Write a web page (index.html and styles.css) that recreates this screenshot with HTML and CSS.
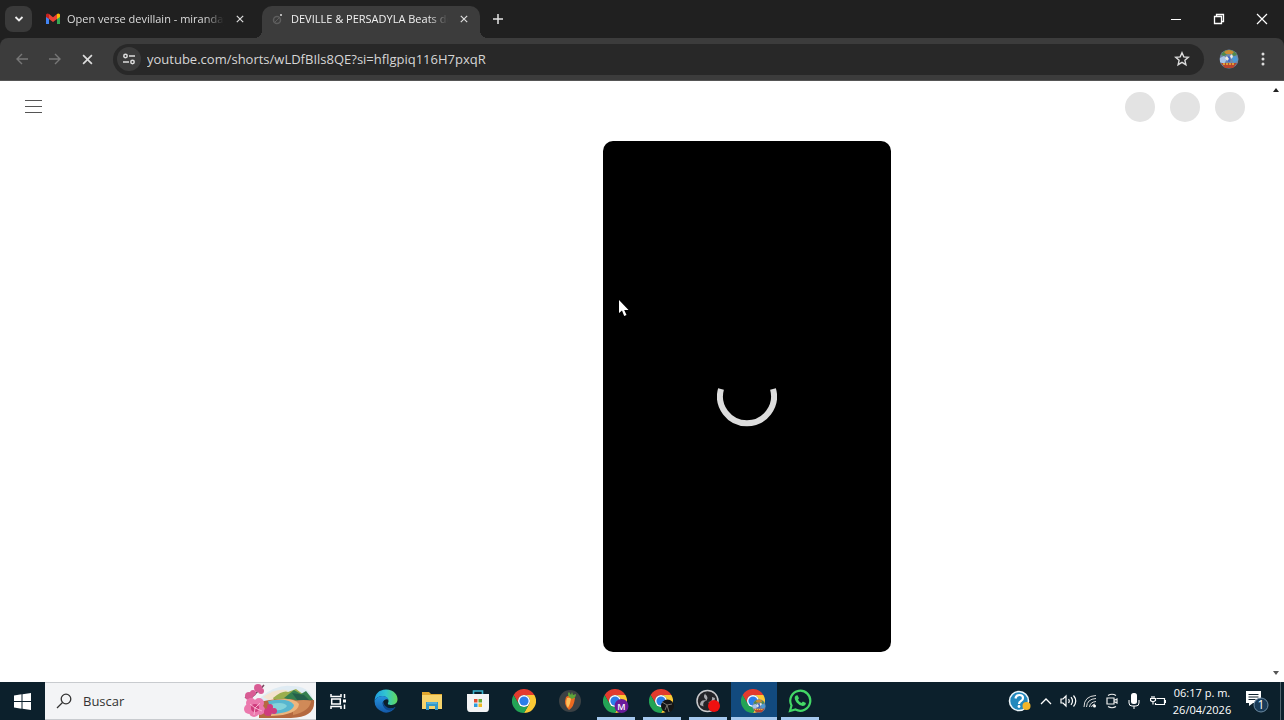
FILE: index.html
```
<!DOCTYPE html>
<html lang="es">
<head>
  <meta charset="UTF-8">
  <meta name="viewport" content="width=device-width, initial-scale=1">
  <title>DEVILLE &amp; PERSADYLA Beats</title>
  <link rel="stylesheet" href="styles.css">
</head>
<body>
  <!-- shared shapes -->
  <svg class="defs" aria-hidden="true">
    <symbol id="chrome" viewBox="-12 -12 24 24">
      <path fill="#e33b2e" d="M-10.4-6A12 12 0 0 1 10.4-6L0-6A6 6 0 0 0-5.2 3Z"/>
      <path fill="#fcc934" transform="rotate(120)" d="M-10.4-6A12 12 0 0 1 10.4-6L0-6A6 6 0 0 0-5.2 3Z"/>
      <path fill="#23a455" transform="rotate(240)" d="M-10.4-6A12 12 0 0 1 10.4-6L0-6A6 6 0 0 0-5.2 3Z"/>
      <circle r="6" fill="#fff"/>
      <circle r="4.6" fill="#2b7de9"/>
    </symbol>
    <symbol id="close" viewBox="0 0 10 10">
      <path d="M1 1l8 8M9 1L1 9" fill="none" stroke="currentColor" stroke-width="1.5"/>
    </symbol>
    <symbol id="avatar" viewBox="0 0 20 20">
      <circle cx="10" cy="10" r="9.5" fill="#7189a8"/>
      <path d="M2 6a9 9 0 0 1 16 0l-3 1-5-3-5 3z" fill="#4f8a4c"/>
      <path d="M5 3q5-4 10 0l-2 2H7z" fill="#c98a35"/>
      <path d="M1 9l4-2 3 3-3 5-4-2z" fill="#a8c4e8"/>
      <path d="M8 7l4 1-1 5-4-1z" fill="#3f66c4"/>
      <path d="M12 8l5-1 2 4-4 3z" fill="#4c9ad6"/>
      <path d="M6 9l2-2 2 3-2 2zM11 7l2-2 1 3-2 2z" fill="#ece9e0"/>
      <path d="M2 14h16l-4 5H6z" fill="#b8452e"/>
      <path d="M4 15h12" stroke="#e8bd3d" stroke-width="1.6" stroke-dasharray="2 1"/>
    </symbol>
  </svg>

  <header class="browser">
    <div class="tabstrip">
      <button class="tab-search" aria-label="Buscar pestañas">
        <svg width="10" height="10" viewBox="0 0 10 10"><path d="M1.5 3L5 6.5 8.5 3" fill="none" stroke="#eee" stroke-width="1.8"/></svg>
      </button>
      <div class="tab">
        <svg class="favicon" width="16" height="12" viewBox="0 0 16 12">
          <path d="M1 2v9h3V4z" fill="#4285f4"/>
          <path d="M12 4v7h3V2z" fill="#34a853"/>
          <path d="M12 1v5l3-2V1.5Q13.5 0 12 1z" fill="#fbbc04"/>
          <path d="M4 1v5l4 3 4-3V1L8 4.2z" fill="#ea4335"/>
          <path d="M1 1.5V4l3 2V1Q2.5 0 1 1.5z" fill="#c5221f"/>
        </svg>
        <span class="tab-title">Open verse devillain - miranday</span>
        <button class="tab-close" aria-label="Cerrar"><svg width="10" height="10"><use href="#close"/></svg></button>
      </div>
      <div class="tab active">
        <svg class="favicon" width="14" height="16" viewBox="0 0 14 16">
          <circle cx="6" cy="9" r="3.5" fill="none" stroke="#5e5e5e" stroke-width="1.5"/>
          <path d="M4 11l4-4" stroke="#5e5e5e"/>
          <circle cx="10" cy="4" r="1" fill="#ddd"/>
        </svg>
        <span class="tab-title">DEVILLE &amp; PERSADYLA Beats de</span>
        <button class="tab-close" aria-label="Cerrar"><svg width="10" height="10"><use href="#close"/></svg></button>
      </div>
      <button class="new-tab" aria-label="Nueva pestaña">
        <svg width="10" height="10" viewBox="0 0 10 10"><path d="M5 0v10M0 5h10" stroke="#e3e3e3" stroke-width="1.5"/></svg>
      </button>
      <div class="window-controls">
        <button aria-label="Minimizar"><svg width="12" height="12" viewBox="0 0 12 12"><path d="M1 6.5h10" stroke="#fff"/></svg></button>
        <button aria-label="Restaurar"><svg width="12" height="12" viewBox="0 0 12 12"><path d="M1.5 3.5h7v7h-7zM3.5 3V1.5h7v7H9" fill="none" stroke="#fff" stroke-width="1.3"/></svg></button>
        <button aria-label="Cerrar ventana"><svg width="12" height="12" viewBox="0 0 12 12"><path d="M1 1l10 10M11 1L1 11" stroke="#fff" stroke-width="1.2"/></svg></button>
      </div>
    </div>

    <div class="toolbar">
      <button class="nav off" aria-label="Atrás"><svg width="14" height="12" viewBox="0 0 14 12"><path d="M13 6H2M7 1L2 6l5 5" fill="none" stroke="currentColor" stroke-width="1.4"/></svg></button>
      <button class="nav off" aria-label="Adelante"><svg width="14" height="12" viewBox="0 0 14 12"><path d="M1 6h11M7 1l5 5-5 5" fill="none" stroke="currentColor" stroke-width="1.4"/></svg></button>
      <button class="nav" aria-label="Detener"><svg width="11" height="11"><use href="#close"/></svg></button>
      <div class="omnibox">
        <button class="site-info" aria-label="Información del sitio">
          <svg width="14" height="14" viewBox="0 0 14 14" fill="none" stroke="#ddd" stroke-width="1.5"><circle cx="3.5" cy="4" r="1.7"/><path d="M7 4h6M1 10h6"/><circle cx="10.5" cy="10" r="1.7"/></svg>
        </button>
        <input class="url" type="text" aria-label="Dirección" value="youtube.com/shorts/wLDfBIls8QE?si=hflgpiq116H7pxqR">
        <button class="star" aria-label="Favorito">
          <svg width="16" height="16" viewBox="0 0 16 16"><path d="M8 1.8l1.8 4.1 4.5.4-3.4 3 1 4.4L8 11.4l-3.9 2.3 1-4.4-3.400-3 4.500-.4z" fill="none" stroke="#ddd" stroke-width="1.4"/></svg>
        </button>
      </div>
      <button class="profile" aria-label="Perfil"><svg width="20" height="20"><use href="#avatar"/></svg></button>
      <button class="menu" aria-label="Menú"><svg width="4" height="14" viewBox="0 0 4 14" fill="#ddd"><circle cx="2" cy="2" r="1.5"/><circle cx="2" cy="7" r="1.5"/><circle cx="2" cy="12" r="1.5"/></svg></button>
    </div>
  </header>

  <div class="page">
    <div class="page-body">
      <div class="masthead">
        <button class="guide" aria-label="Guía"><svg width="18" height="14" viewBox="0 0 18 14"><path d="M1 .5h17M1 6.5h17M1 12.5h17" stroke="#555" stroke-width="1.2"/></svg></button>
        <div class="skeletons"><span></span><span></span><span></span></div>
      </div>
      <main class="shorts">
        <div class="player">
          <svg class="spinner" width="60" height="62" viewBox="0 0 60 62"><path d="M4 23A27 27 0 1 0 56 23" fill="none" stroke="#ddd" stroke-width="6"/></svg>
          <svg class="cursor" width="12" height="18" viewBox="0 0 12 18"><path d="M1 1v13l3-2.600L6.200 17l2.300-1-2.300-5h4.300z" fill="#fff"/></svg>
        </div>
      </main>
    </div>
    <div class="scrollbar">
      <svg width="8" height="6" viewBox="0 0 8 6"><path d="M1 5l3-4 3 4z" fill="#222"/></svg>
      <svg width="8" height="6" viewBox="0 0 8 6"><path d="M1 1l3 4 3-4z" fill="#555"/></svg>
    </div>
  </div>

  <footer class="taskbar">
    <button class="start" aria-label="Inicio">
      <svg width="17" height="17" viewBox="0 0 17 17" fill="#fff"><path d="M0 2.400L7.500 1.300V8H0zM8.500 1.200L17 0v8H8.500zM0 9h7.500v6.700L0 14.600zM8.500 9H17v8l-8.500-1.200z"/></svg>
    </button>
    <label class="search">
      <svg width="16" height="16" viewBox="0 0 16 16" fill="none" stroke="#333" stroke-width="1.3"><circle cx="10" cy="6" r="4.800"/><path d="M6.500 9.500L1 15"/></svg>
      <input type="text" aria-label="Buscar" placeholder="Buscar">
      <svg class="search-art" width="72" height="36" viewBox="0 0 72 36">
        <path d="M18 14Q34 1 48 3 66 3 70 16v8H14z" fill="#dfebf3"/>
        <path d="M20 14Q32 5 44 7l4 6-20 5z" fill="#f4e3cf"/>
        <path d="M30 15Q40 7 45 9l8-3 16 12v5H34z" fill="#9cae4d"/>
        <path d="M41 15l10-8 7 4 5-3 8 10-14 2z" fill="#357f50"/>
        <path d="M49 10l6 8 14 2-8-8z" fill="#245f4b"/>
        <path d="M16 19Q46 13 54 18l17-1Q73 34 48 35H16z" fill="#b5693f"/>
        <path d="M50 18q12-2 18 0-1 10-18 14z" fill="#d08a58"/>
        <path d="M26 18Q50 13 56 21 55 32 28 33z" fill="#edb67e"/>
        <path d="M25 18Q46 14 51 22 50 30 29 31z" fill="#58b6cf"/>
        <path d="M28 21q13-3 16 2-3 5-13 4z" fill="#83d2da"/>
        <path d="M2 14q5 3 11-4 5-4 8-8" fill="none" stroke="#77465e" stroke-width="1.5"/>
        <g fill="#d85c94"><circle cx="6" cy="13" r="4"/><circle cx="10" cy="10" r="3"/><circle cx="15" cy="5" r="4"/><circle cx="18" cy="8" r="3"/></g>
        <g fill="#eb79ad"><circle cx="8" cy="20" r="5"/><circle cx="16" cy="20" r="5"/><circle cx="17" cy="27" r="5"/><circle cx="11" cy="29" r="5"/><circle cx="6" cy="26" r="5"/></g>
        <g fill="#cf3c7d"><circle cx="12" cy="25" r="4"/><circle cx="27" cy="24" r="3"/><circle cx="25" cy="29" r="4"/><circle cx="31" cy="28" r="3"/></g>
        <path d="M12 25l-5-4M12 25l5-5M12 25l-1 7M12 25l7 3" stroke="#f8b2d0"/>
      </svg>
    </label>
    <button class="task-view" aria-label="Vista de tareas">
      <svg width="17" height="15" viewBox="0 0 17 15" fill="none" stroke="#fff" stroke-width="1.5"><path d="M1 0v2.500h10V0M1 15v-2.500h10V15M1.700 5h8.600v5H1.700zM14.500 0v4M14.500 10.500V15"/><path d="M13 5.500h3v3h-3z" fill="#fff" stroke="none"/></svg>
    </button>
    <nav class="apps">
      <button aria-label="Edge">
        <svg width="24" height="24" viewBox="0 0 24 24">
          <defs>
            <linearGradient id="edge-top" x1="0" x2="1"><stop offset="0" stop-color="#1e9be0"/><stop offset=".5" stop-color="#32c6d0"/><stop offset="1" stop-color="#62d957"/></linearGradient>
            <linearGradient id="edge-low" x1="0" y1="0" x2="0" y2="1"><stop offset="0" stop-color="#2493df"/><stop offset="1" stop-color="#1459a8"/></linearGradient>
          </defs>
          <path d="M.5 12Q1 1 12 .5C20 .5 24 6 23.500 11c-.5 4-4 5-7 5-3-.2-3-1.500-2-3Q15 8 9 7 3 7 .5 12z" fill="url(#edge-top)"/>
          <path d="M.5 12Q3 7 9 7q5 .5 5.500 4-1-1-3-.5C6 13 9 20 16 19.500q3 0 5.500-1.500c-3 5-8 6.500-12 5.300Q.5 20 .5 12z" fill="url(#edge-low)"/>
          <path d="M9.500 12c-2 5 2 10 7 9.500q3-.5 5-3.500-4 2.500-8 .5-4-2-4-6.500z" fill="#0d478d"/>
        </svg>
      </button>
      <button aria-label="Explorador">
        <svg width="22" height="20" viewBox="0 0 22 20"><path d="M1 1h7l2 2h11v4H1z" fill="#e0a72e"/><path d="M1 4h20v14H1z" fill="#f6d36c"/><path d="M5 19v-8h12v8h-3v-4H8v4z" fill="#3298c9"/><path d="M6 12h10" stroke="#77c5e5"/></svg>
      </button>
      <button aria-label="Tienda">
        <svg width="22" height="24" viewBox="0 0 22 24"><path d="M6.500 6V2h9v4" fill="none" stroke="#38b3cd" stroke-width="1.600"/><path d="M0 5h22v14q0 4-3 4H3q-3 0-3-4z" fill="#f3f4f5"/><path d="M7 10h3.500v3.500H7z" fill="#e34c30"/><path d="M11.500 10H15v3.500h-3.500z" fill="#63a936"/><path d="M7 14.500h3.500V18H7z" fill="#2b9cdc"/><path d="M11.500 14.500H15V18h-3.500z" fill="#efb920"/></svg>
      </button>
      <button aria-label="Chrome"><svg width="24" height="24"><use href="#chrome"/></svg></button>
      <button aria-label="FL Studio">
        <svg width="24" height="24" viewBox="0 0 24 24"><circle cx="12" cy="12" r="11" fill="#3c4144"/><path d="M8 8q5-4 9 1-1 9-6 12-6-5-3-13z" fill="#ee6a20"/><path d="M9 9q3-1 4 1-1 6-3 9-3-4-1-10z" fill="#ffc05a"/><path d="M11 8Q9 5 11 3l2 3 1-3 1 3 3-1q0 4-4 5z" fill="#5fa43a"/></svg>
      </button>
      <button class="open" aria-label="Chrome, perfil M">
        <svg width="26" height="24" viewBox="0 0 26 24"><use href="#chrome" width="24" height="24"/><circle cx="18.500" cy="17" r="7" fill="#6a1b9a"/><text class="badge-letter" x="18.500" y="20.500">M</text></svg>
      </button>
      <button class="open" aria-label="Chrome, perfil 2">
        <svg width="26" height="24" viewBox="0 0 26 24"><use href="#chrome" width="24" height="24"/><circle cx="18.500" cy="17" r="6.500" fill="#151515"/><path d="M13 13l5 3 5-1M18 16l-2 5M18 16l2 7" fill="none" stroke="#77736b"/></svg>
      </button>
      <button class="open" aria-label="OBS">
        <svg width="24" height="24" viewBox="0 0 24 24"><circle cx="11.500" cy="12" r="10.500" fill="#242428" stroke="#c9c9cc" stroke-width="1.5"/><g fill="#a9a9ae"><path d="M11 3q-6 4-.5 8.500Q13 8 9 5zM4 16q0-6 7-4.500-5 1-3.500 6zM19 9q-1 8-7 4 5 0 4-5z"/></g><circle cx="18" cy="17" r="6" fill="#ef1010"/></svg>
      </button>
      <button class="open current" aria-label="Chrome, perfil 3">
        <svg width="26" height="24" viewBox="0 0 26 24"><use href="#chrome" width="24" height="24"/><use href="#avatar" x="11" y="10" width="14" height="14"/></svg>
      </button>
      <button class="open" aria-label="WhatsApp">
        <svg width="24" height="24" viewBox="0 0 24 24"><path d="M2 22l1.500-5.500A10 10 0 1 1 7.500 20.500z" fill="none" stroke="#43d866" stroke-width="2.200"/><path d="M8 6.500l1.500-.2 1.500 3-1 1.500q1.300 2.300 3.500 3.200l1.400-1.500 3 1.500c0 2-1.400 3-3.200 3C10.500 16.500 6 11.500 6.800 8q.3-1 1.200-1.500z" fill="#43d866"/></svg>
      </button>
    </nav>

    <div class="tray">
      <button aria-label="Ayuda">
        <svg width="24" height="22" viewBox="0 0 24 22"><circle cx="11" cy="11" r="9.500" fill="#2288bd" stroke="#eef6fa" stroke-width="1.600"/><path d="M7.500 8.500Q8 5 11.500 5t3.500 3q0 2-2 3t-2 3" fill="none" stroke="#fff" stroke-width="2.200"/><circle cx="11" cy="16.500" r="1.400" fill="#fff"/><circle cx="18.500" cy="16" r="4" fill="#f2b529"/></svg>
      </button>
      <button aria-label="Iconos ocultos"><svg width="12" height="8" viewBox="0 0 12 8"><path d="M1 7l5-5 5 5" fill="none" stroke="#fff" stroke-width="1.300"/></svg></button>
      <button aria-label="Volumen"><svg width="17" height="14" viewBox="0 0 17 14" fill="none" stroke="#fff" stroke-width="1.2"><path d="M1 5h2l3-3v10L3 9H1zM8.500 5q1.500 2 0 4M11 3.200q3 3.800 0 7.600M13.500 1.500q4.500 5.500 0 11"/></svg></button>
      <button aria-label="Red"><svg width="14" height="14" viewBox="0 0 14 14" fill="none" stroke="#ddd"><path d="M1 13Q1 2 13 1.500M3.500 13Q4 5 13 4.500M6.500 13Q7 8 13 7.500"/><circle cx="11.500" cy="12" r="1.500" fill="#fff" stroke="none"/><path d="M8.500 13q.5-2.500 3.500-3"/></svg></button>
      <button aria-label="Reunirse ahora"><svg width="14" height="16" viewBox="0 0 14 16" fill="none" stroke="#eee" stroke-width="1.200"><path d="M3 2.500q4-2.500 8 0M3 13.500q4 2.500 8 0M2 5h7v6H2zM9 7.500L12 6v4L9 8.500"/></svg></button>
      <button aria-label="Micrófono"><svg width="12" height="16" viewBox="0 0 12 16"><rect x="3" y="0" width="6" height="11" rx="2.500" fill="#fff"/><path d="M1 7v3q0 3 3 3h4q3 0 3-3V7M6 13v3" fill="none" stroke="#fff"/></svg></button>
      <button class="battery" aria-label="Batería"><svg width="16" height="12" viewBox="0 0 16 12" fill="none" stroke="#fff" stroke-width="1.2"><path d="M6.500 3.500h8v6H5.500V8M15.500 5v3M.5 3.500h5v2L3 7 .5 5.500zM2 1v2M4 1v2M3 7v2.500"/></svg></button>
      <div class="clock"><time>06:17 p. m.</time><time>26/04/2026</time></div>
      <button class="notifications" aria-label="Notificaciones">
        <svg width="24" height="24" viewBox="0 0 24 24"><path d="M1 2h15v12H8l-4 3v-3H1z" fill="#fff"/><path d="M3.500 5.500h10M3.500 8h10M3.500 10.500h7" stroke="#0c202c"/><circle cx="16" cy="16" r="7" fill="#193b58" stroke="#6d8ba3"/><text class="count" x="16" y="20">1</text></svg>
      </button>
      <button class="show-desktop" aria-label="Mostrar escritorio"></button>
    </div>
  </footer>
</body>
</html>
```
FILE: styles.css
```
* {box-sizing:border-box;}
body {
  margin:0; height:100vh; display:flex; flex-direction:column; overflow:hidden;
  font-family:"Open Sans", "Noto Sans", sans-serif; font-size:12px; background:#fff;
}
button {
  display:flex; align-items:center; justify-content:center; flex:none;
  padding:0; border:0; background:none; color:#ddd; font:inherit;
}
input {border:0; padding:0; background:none; font:inherit; min-width:0; outline:0;}
svg {display:block; flex:none;}
.defs {position:absolute; width:0; height:0;}

/* tabs */
.browser {background:#202020;}
.tabstrip {display:flex; height:38px; padding:0 1px 0 5px; align-items:center;}
.tab-search {width:27px; height:26px; border-radius:8px; background:#3a3a3a;}
.tab {
  display:flex; align-items:center; position:relative; align-self:flex-end;
  width:218px; height:32px; padding:0 8px 6px 9px; color:#ddd;
}
.tab:not(.active) {margin-left:4px; width:226px; padding-right:14px;}
.tab.active {background:#3c3c3c; border-radius:10px 10px 0 0;}
.tab.active::before, .tab.active::after {
  content:""; position:absolute; bottom:0; width:8px; height:8px;
}
.tab.active::before {right:100%; background:radial-gradient(circle at 0 0, transparent 8px, #3c3c3c 8px);}
.tab.active::after {left:100%; background:radial-gradient(circle at 100% 0, transparent 8px, #3c3c3c 8px);}
.favicon {margin-right:6px;}
.tab-title {
  flex:1; min-width:0; overflow:hidden; white-space:nowrap; line-height:18px; font-size:11px;
  -webkit-mask-image:linear-gradient(to right, #000 calc(100% - 20px), transparent);
  mask-image:linear-gradient(to right, #000 calc(100% - 20px), transparent);
}
.active .tab-title {color:#f0f0f0;}
.tab-close {width:16px; height:16px; margin-left:8px;}
.tab-close svg {width:8px; height:8px;}
.new-tab {width:28px; height:28px; margin-left:4px;}
.window-controls {display:flex; margin-left:auto;}
.window-controls button {width:43px; height:38px;}

/* toolbar */
.toolbar {
  display:flex; align-items:center; height:43px; padding:0 11px 0 5px;
  background:#3c3c3c; border-radius:8px 8px 0 0; border-bottom:1px solid #555;
}
.nav {width:33px; height:30px;}
.nav.off {color:#777;}
.omnibox {
  flex:1; display:flex; align-items:center; height:31px; margin-left:9px;
  padding:0 12px 0 4px; border-radius:16px; background:#282828;
}
.site-info {width:24px; height:24px; border-radius:50%; background:#3c3c3c;}
.url {flex:1; height:24px; margin-left:6px; color:#d6d6d6; font-size:13px;}
.star {width:20px; height:24px;}
.profile {width:34px; height:30px; margin-left:8px;}
.menu {width:20px; height:30px; margin-left:7px;}

/* page */
.page {flex:1; display:flex; min-height:0;}
.page-body {flex:1; display:flex; flex-direction:column; min-width:0;}
.masthead {display:flex; align-items:center; justify-content:space-between; height:52px; padding:0 23px 0 15px;}
.guide {width:36px; height:36px;}
.skeletons {display:flex; gap:15px;}
.skeletons span {width:30px; height:30px; border-radius:50%; background:#e3e3e3;}
.shorts {flex:1; display:flex; justify-content:center; min-height:0; padding:8px 0 30px 226px;}
.player {
  position:relative; display:flex; align-items:center; justify-content:center;
  height:100%; aspect-ratio:9 / 16; border-radius:10px; background:#000;
}
.cursor {position:absolute; left:15px; top:158px;}
.scrollbar {
  display:flex; flex-direction:column; justify-content:space-between; align-items:center;
  width:16px; padding:6px 0;
}

/* taskbar */
.taskbar {display:flex; height:38px; background:#0c202c;}
.start {width:45px;}
.search {
  display:flex; align-items:center; flex:0 1 271px; min-width:0; padding-left:11px;
  background:#f3f4f6; border:1px solid #c8cbcf; border-width:1px 0;
}
.search input {flex:1; margin-left:11px; font-size:13px; color:#333;}
.search input::placeholder {color:#333; opacity:1;}
.search-art {margin-right:1px;}
.task-view {width:47px; padding-right:2px;}
.apps {display:flex;}
.apps button {position:relative; width:46px;}
.apps .open::after {
  content:""; position:absolute; left:4px; right:4px; bottom:0; height:3px; background:#a5c8ee;
}
.apps .current {background:#124a7e;}
.apps .current::after {left:0; right:0;}
.badge-letter {font-size:9px; font-weight:600; fill:#fff; text-anchor:middle;}

.tray {display:flex; margin-left:auto; align-items:stretch;}
.tray button {width:22px;}
.tray button:first-child {width:30px;}
.tray .battery {width:25px;}
.clock {
  display:flex; flex-direction:column; justify-content:center; align-items:center;
  width:64px; color:#fff; font-size:11px; line-height:17px; white-space:nowrap;
}
.tray .notifications {width:46px;}
.count {font-size:12px; fill:#fff; text-anchor:middle;}
.tray .show-desktop {width:4px; border-left:1px solid #53636d;}
```
